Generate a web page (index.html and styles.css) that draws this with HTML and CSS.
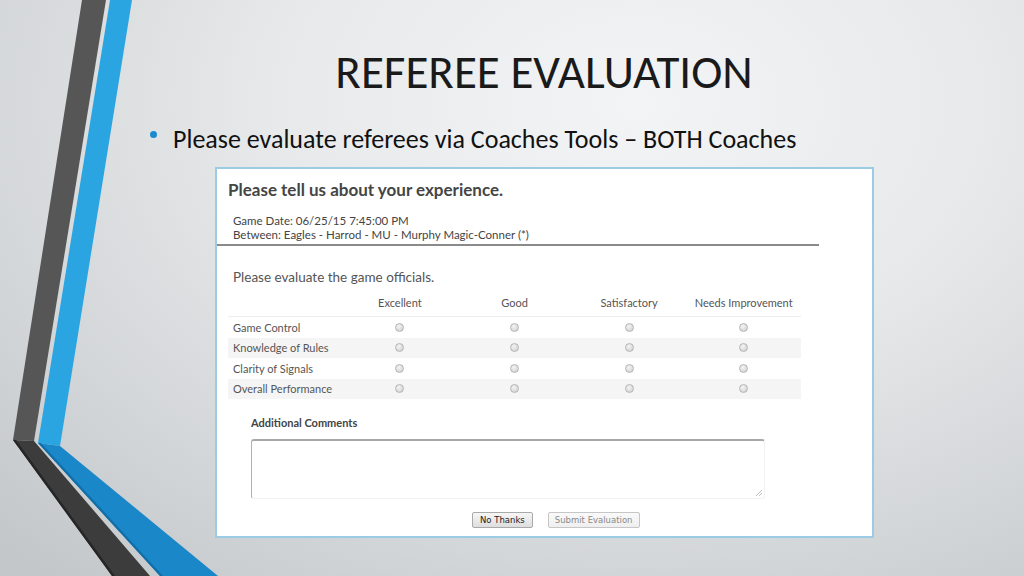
FILE: index.html
```html
<!DOCTYPE html>
<html>
<head>
<meta charset="utf-8">
<link rel="stylesheet" href="styles.css">
</head>
<body>
<div class="slide">
  <svg class="stripes" viewBox="0 0 220 576" width="220" height="576" aria-hidden="true">
    <polygon points="82,0 106,0 34,441 13,440" fill="#565656"/>
    <polygon points="110,0 132,0 60,446 38,443" fill="#2ba5e2"/>
    <polygon points="13,440 34,441 150,576 112,576" fill="#3c3c3c"/>
    <polygon points="13,440 16,440 115,576 112,576" fill="#262626"/>
    <polygon points="38,443 60,446 218,576 160,576" fill="#1987c8"/>
    <polygon points="38,443 41,443 163,576 160,576" fill="#126ea6"/>
  </svg>

  <div class="content">
    <h1 class="title">REFEREE EVALUATION</h1>
    <ul class="bullets">
      <li><span class="dot"></span>Please evaluate referees via Coaches Tools – BOTH Coaches</li>
    </ul>

    <div class="panel">
      <div class="panel-head">
        <h2 class="exp">Please tell us about your experience.</h2>
        <div class="meta">
          <div>Game Date: 06/25/15 7:45:00 PM</div>
          <div>Between: Eagles - Harrod - MU - Murphy Magic-Conner (*)</div>
        </div>
      </div>

      <p class="lead">Please evaluate the game officials.</p>

      <div class="grid">
        <div class="row head">
          <div class="cell label"></div>
          <div class="cell">Excellent</div>
          <div class="cell">Good</div>
          <div class="cell">Satisfactory</div>
          <div class="cell">Needs Improvement</div>
        </div>
        <div class="row">
          <div class="cell label">Game Control</div>
          <div class="cell"><span class="radio"></span></div>
          <div class="cell"><span class="radio"></span></div>
          <div class="cell"><span class="radio"></span></div>
          <div class="cell"><span class="radio"></span></div>
        </div>
        <div class="row alt">
          <div class="cell label">Knowledge of Rules</div>
          <div class="cell"><span class="radio"></span></div>
          <div class="cell"><span class="radio"></span></div>
          <div class="cell"><span class="radio"></span></div>
          <div class="cell"><span class="radio"></span></div>
        </div>
        <div class="row">
          <div class="cell label">Clarity of Signals</div>
          <div class="cell"><span class="radio"></span></div>
          <div class="cell"><span class="radio"></span></div>
          <div class="cell"><span class="radio"></span></div>
          <div class="cell"><span class="radio"></span></div>
        </div>
        <div class="row alt">
          <div class="cell label">Overall Performance</div>
          <div class="cell"><span class="radio"></span></div>
          <div class="cell"><span class="radio"></span></div>
          <div class="cell"><span class="radio"></span></div>
          <div class="cell"><span class="radio"></span></div>
        </div>
      </div>

      <div class="comments">
        <div class="comments-label">Additional Comments</div>
        <div class="textarea"><span class="grip"></span></div>
      </div>

      <div class="buttons">
        <span class="btn">No Thanks</span>
        <span class="btn disabled">Submit Evaluation</span>
      </div>
    </div>
  </div>
</div>
</body>
</html>
```

FILE: styles.css
```css
* { box-sizing: border-box; }
html, body { margin: 0; padding: 0; }
body { width: 1024px; height: 576px; overflow: hidden; }

.slide {
  position: relative;
  width: 1024px;
  height: 576px;
  overflow: hidden;
  background:
    radial-gradient(ellipse 900px 620px at 62% 18%, #f3f4f5 0%, #e7e9ea 40%, #d3d6d8 75%, #c3c7c9 100%);
  font-family: Carlito, "Open Sans", "Liberation Sans", sans-serif;
}

.stripes {
  position: absolute;
  left: 0;
  top: 0;
}

.content {
  position: relative;
  display: flex;
  flex-direction: column;
  padding-top: 48px;
}

.title {
  margin: 0;
  padding-left: 150px;
  padding-right: 86px;
  text-align: center;
  font-weight: 300;
  font-size: 47px;
  line-height: 48px;
  color: #1a1a1a;
  letter-spacing: 0;
}

.bullets {
  list-style: none;
  margin: 28px 0 0 0;
  padding: 0 0 0 150px;
}
.bullets li {
  display: flex;
  align-items: center;
  font-size: 26px;
  line-height: 30px;
  color: #111;
}
.dot {
  width: 7px;
  height: 7px;
  border-radius: 50%;
  background: #1a8ad0;
  margin: -9px 16px 0 0;
  flex: none;
}

.panel {
  margin: 13px 0 0 215px;
  width: 659px;
  height: 371px;
  background: #fff;
  border: 2px solid #9ccbe4;
  padding: 0;
  font-family: Lato, "Open Sans", sans-serif;
  color: #555;
}

.panel-head {
  width: 602px;
  border-bottom: 2px solid #8a8a8a;
  padding: 11px 0 2px 11px;
}
.exp {
  margin: 0;
  font-size: 17px;
  line-height: 20px;
  font-weight: 700;
  color: #454545;
}
.meta {
  margin-top: 14px;
  padding-left: 5px;
  font-size: 11.5px;
  line-height: 14px;
  color: #444;
}

.lead {
  margin: 22px 0 0 16px;
  font-size: 13.5px;
  line-height: 18px;
  color: #555;
}

.grid {
  margin: 2px 0 0 11px;
  width: 573px;
  font-size: 11px;
  color: #555;
}
.row {
  display: grid;
  grid-template-columns: repeat(5, 1fr);
  height: 20.5px;
  align-items: center;
}
.row.head {
  height: 29px;
  border-bottom: 1px solid #eeeeee;
}
.row.alt { background: #f5f5f5; }
.cell {
  text-align: center;
  display: flex;
  justify-content: center;
  align-items: center;
}
.cell.label {
  justify-content: flex-start;
  padding-left: 5px;
}
.radio {
  width: 9px;
  height: 9px;
  border-radius: 50%;
  border: 1px solid #b5b5b5;
  background: radial-gradient(circle at 40% 35%, #f4f4f4 0%, #d8d8d8 70%, #c8c8c8 100%);
}

.comments {
  margin: 17px 0 0 34px;
}
.comments-label {
  font-size: 11px;
  font-weight: 700;
  color: #444;
  line-height: 14px;
}
.textarea {
  position: relative;
  margin-top: 9px;
  width: 514px;
  height: 60px;
  border: 1px solid #c8c8c8;
  border-top: 2px solid #a8a8a8;
  border-left: 1px solid #b0b0b0;
  border-right-color: #f2f2f2;
  border-bottom-color: #f2f2f2;
  border-radius: 3px;
  background: #fff;
}
.grip {
  position: absolute;
  right: 2px;
  bottom: 2px;
  width: 6px;
  height: 6px;
  background: linear-gradient(135deg, transparent 45%, #c0c0c0 45%, #c0c0c0 55%, transparent 55%, transparent 70%, #c0c0c0 70%, #c0c0c0 80%, transparent 80%);
}

.buttons {
  display: flex;
  gap: 15px;
  margin: 13px 0 0 255px;
}
.btn {
  display: inline-flex;
  align-items: center;
  justify-content: center;
  height: 16px;
  padding: 0 7px;
  font-family: "DejaVu Sans", Verdana, sans-serif;
  font-size: 8.5px;
  color: #222;
  border: 1px solid #a9a9a9;
  border-radius: 2px;
  background: linear-gradient(#f6f6f6, #dedede);
}
.btn.disabled {
  padding: 0 6px;
  color: #8a8a8a;
  border-color: #c6c6c6;
  background: linear-gradient(#fafafa, #efefef);
}
```
